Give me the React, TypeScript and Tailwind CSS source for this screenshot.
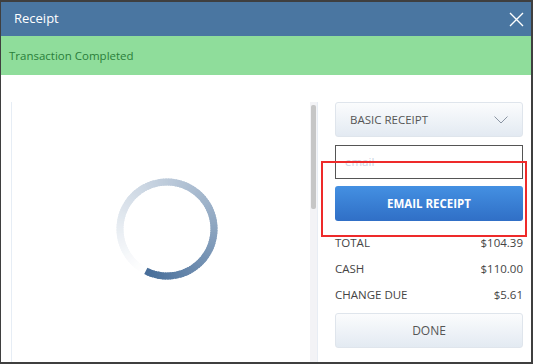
const mix = (t: number) => {
	const a = [255, 255, 255];
	const b = [70, 109, 153];
	const c = a.map((v, i) => Math.round(v + (b[i] - v) * t));
	return `rgb(${c[0]},${c[1]},${c[2]})`;
};

const Spinner = () => {
	const segs = 120;
	const r = 47;
	const cx = 54;
	const cy = 54;
	const start = 205;
	const items = [];
	for (let i = 0; i < segs; i++) {
		const a0 = ((start + (i * 360) / segs) * Math.PI) / 180;
		const a1 = ((start + ((i + 1.6) * 360) / segs) * Math.PI) / 180;
		const x0 = cx + r * Math.sin(a0);
		const y0 = cy - r * Math.cos(a0);
		const x1 = cx + r * Math.sin(a1);
		const y1 = cy - r * Math.cos(a1);
		const t = Math.pow(i / segs, 1.2);
		items.push(
			<path
				key={i}
				d={`M${x0} ${y0} A${r} ${r} 0 0 1 ${x1} ${y1}`}
				stroke={mix(t)}
				strokeWidth={7}
				fill="none"
			/>
		);
	}
	return (
		<svg width="108" height="108" viewBox="0 0 108 108">
			{items}
		</svg>
	);
};

const Row = ({ label, value }: { label: string; value: string }) => (
	<div className="flex justify-between h-[26px] items-center text-[11.5px] text-[#444]">
		<span>{label}</span>
		<span>{value}</span>
	</div>
);

export default function App() {
	return (
		<div
			className="w-[533px] h-[364px] bg-white border-l border-t-2 border-r-2 border-b-2 border-[#3f3f3f] flex flex-col overflow-hidden"
			style={{ fontFamily: '"Open Sans", sans-serif' }}
		>
			<div className="h-[34px] bg-[#4a76a1] flex items-center justify-between pl-[13px] pr-[7px] shrink-0">
				<span className="text-white text-[13px]">Receipt</span>
				<svg width="15" height="15" viewBox="0 0 15 15">
					<path d="M1 1 L14 14 M14 1 L1 14" stroke="#fff" strokeWidth="1.4" />
				</svg>
			</div>
			<div className="h-[39px] bg-[#8fdd9b] flex items-center pl-[8px] shrink-0">
				<span className="text-[#2a7e3a] text-[11.5px]">Transaction Completed</span>
			</div>
			<div className="flex flex-1 pt-[27px] min-h-0">
				<div className="ml-[10px] w-[307px] border-l border-[#e6edf5] flex">
					<div className="flex-1 flex items-center justify-center pb-[6px] pl-[12px]">
						<Spinner />
					</div>
					<div className="w-[8px] bg-[#f3f3f6] border-r border-[#e8edf4] pt-[3px] flex justify-center">
						<div className="w-[5px] h-[104px] bg-[#c6c6c6] rounded-[2px]" />
					</div>
				</div>
				<div className="ml-[17px] w-[188px] flex flex-col">
					<div className="h-[35px] rounded-[3px] border border-[#dfe5ec] bg-gradient-to-b from-[#fbfcfd] to-[#e3eaf2] flex items-center justify-between pl-[14px] pr-[14px]">
						<span className="text-[11.5px] font-medium text-[#555]">BASIC RECEIPT</span>
						<svg width="14" height="8" viewBox="0 0 14 8">
							<path d="M0.5 0.5 L7 7 L13.5 0.5" stroke="#8a94a3" strokeWidth="1" fill="none" />
						</svg>
					</div>
					<div className="relative mt-[8px]">
						<div className="h-[34px] border border-[#555] flex items-center pl-[9px]">
							<span className="text-[11.5px] text-[#c9d3e2]">email</span>
						</div>
						<div className="h-[35px] mt-[7px] rounded-[3px] bg-gradient-to-b from-[#4490e2] to-[#306fc6] flex items-center justify-center">
							<span className="text-white text-[11.5px] font-bold">EMAIL RECEIPT</span>
						</div>
						<div className="absolute left-[-14px] right-[-4px] top-[16px] h-[76px] border-2 border-[#ee2a2a]" />
					</div>
					<div className="mt-[9px]">
						<Row label="TOTAL" value="$104.39" />
						<Row label="CASH" value="$110.00" />
						<Row label="CHANGE DUE" value="$5.61" />
					</div>
					<div className="mt-[5px] h-[35px] rounded-[3px] border border-[#dfe5ec] bg-gradient-to-b from-[#fbfcfd] to-[#e3eaf2] flex items-center justify-center">
						<span className="text-[12px] font-medium text-[#555]">DONE</span>
					</div>
				</div>
			</div>
		</div>
	);
}
